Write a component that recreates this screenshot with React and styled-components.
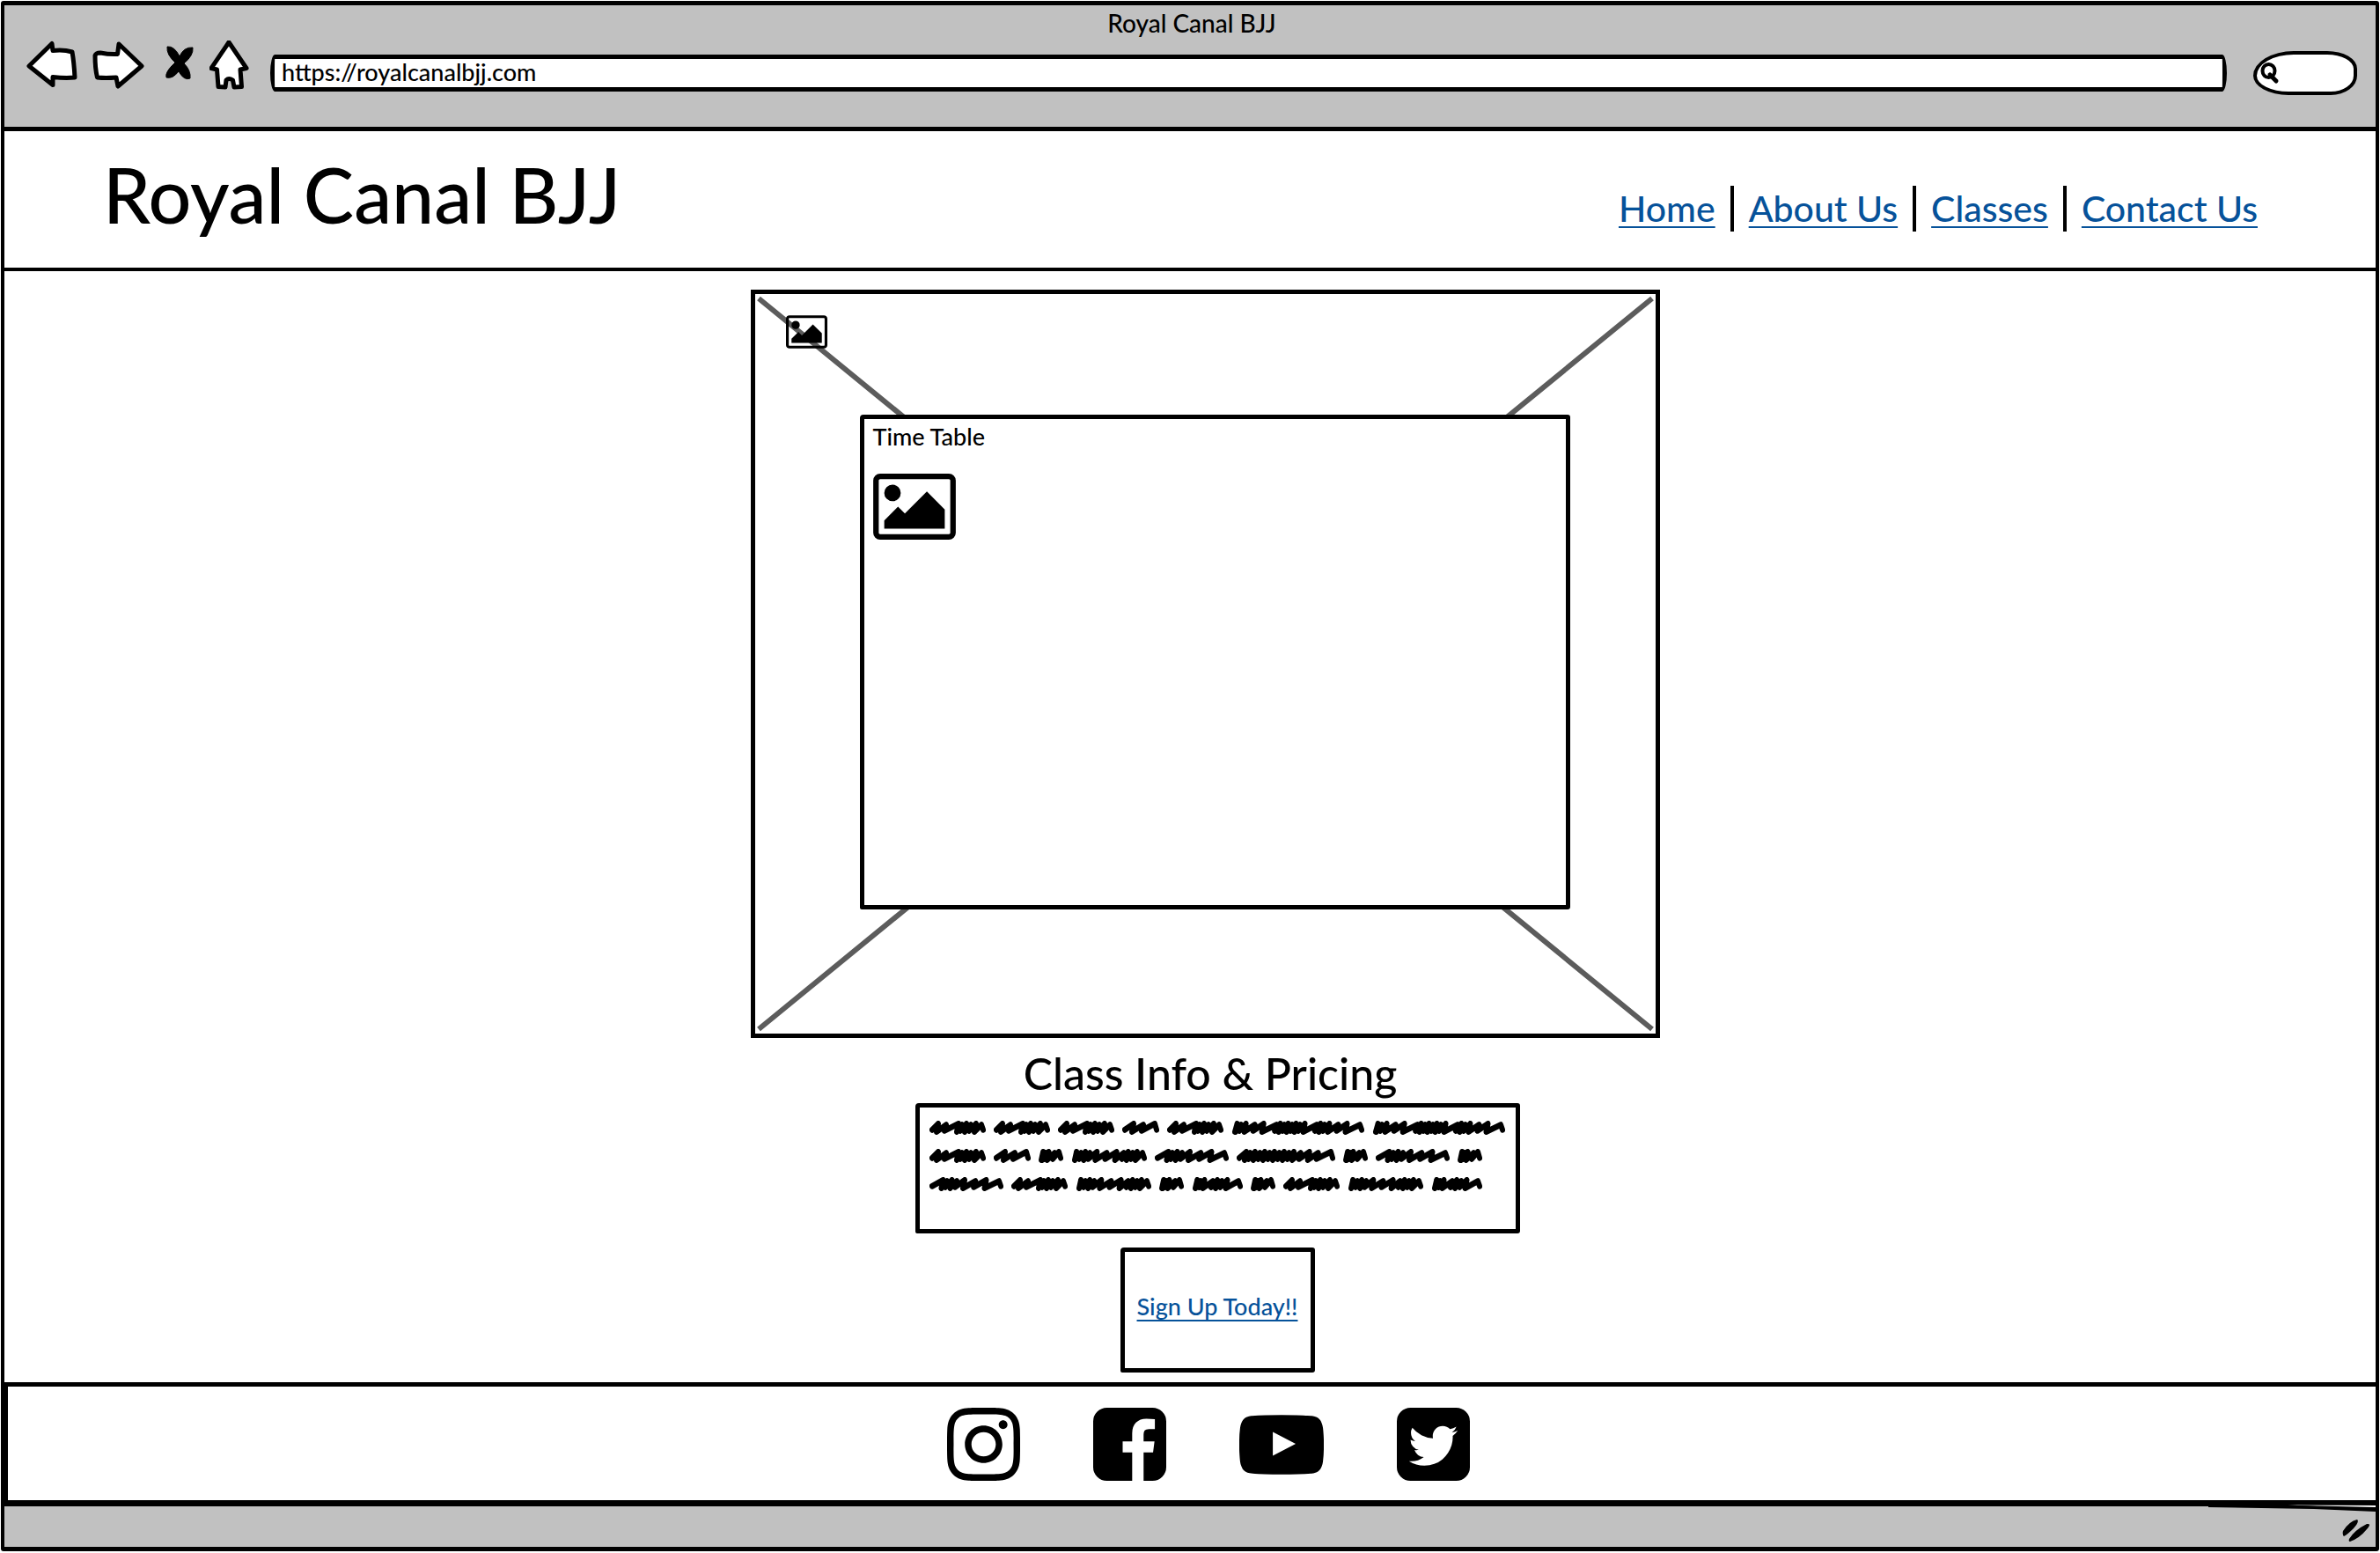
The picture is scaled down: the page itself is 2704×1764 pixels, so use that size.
import React from "react";
import styled, { createGlobalStyle } from "styled-components";
import { FaInstagram } from "react-icons/fa";

const ink = "#000";
const chromeGrey = "#c1c1c1";
const linkBlue = "#06529a";
const fontStack = 'Lato, "Open Sans", sans-serif';

const GlobalStyle = createGlobalStyle`
  *, *::before, *::after { box-sizing: border-box; }
  body { margin: 0; background: #fff; color: ${ink}; font-family: ${fontStack}; font-size: 27px; font-weight: 500; }
  svg { display: block; }
`;

const Browser = styled.div`
  display: flex;
  flex-direction: column;
  min-height: calc(100vh - 3px);
  margin: 1px 1px 2px;
  border: 5px solid ${ink};
  border-width: 5px 4px;
  border-radius: 3px;
`;

const Chrome = styled.header`
  background: ${chromeGrey};
  border-bottom: 5px solid ${ink};
  padding: 2px 21px 42px 25px;
`;

const WindowTitle = styled.div`
  margin-bottom: 2px;
  text-align: center;
  font-size: 28px;
  line-height: 36px;
`;

const Toolbar = styled.div`
  display: flex;
  align-items: center;
  gap: 16px;
  height: 56px;
`;

const ToolButton = styled.button`
  padding: 0;
  border: 0;
  background: none;
`;

const AddressBar = styled.input`
  flex: 1;
  min-width: 0;
  height: 42px;
  margin: 18px 14px 0 7px;
  padding: 0 8px 4px;
  background: #fff;
  border: 5px solid ${ink};
  border-radius: 6px / 24px;
  font: inherit;
  color: inherit;
`;

const SearchBox = styled.label`
  display: flex;
  align-items: center;
  width: 118px;
  height: 50px;
  margin-top: 18px;
  padding-left: 4px;
  background: #fff;
  border: 4px solid ${ink};
  border-radius: 46px 34px 30px 40px / 28px 20px 22px 22px;
`;

const SearchInput = styled.input`
  width: 70px;
  border: 0;
  outline: 0;
  background: none;
  font: inherit;
`;

const SiteHeader = styled.header`
  display: flex;
  justify-content: space-between;
  align-items: center;
  height: 159px;
  padding: 0 134px 0 112px;
  border-bottom: 4px solid ${ink};
`;

const SiteTitle = styled.h1`
  margin: 0 0 12px;
  font-size: 86px;
  font-weight: 500;
  line-height: 96px;
`;

const Nav = styled.nav`
  display: flex;
  align-items: center;
  margin-top: 20px;
`;

const TextLink = styled.a`
  color: ${linkBlue};
  font-size: ${(p) => p.$size}px;
  line-height: 52px;
  text-decoration: underline;
  text-decoration-thickness: 2px;
  text-decoration-skip-ink: none;
  text-underline-offset: 5px;
`;

const NavItem = styled.span`
  padding: 0 17px;
  border-right: 4px solid ${ink};
  &:last-child { border-right: 0; padding-right: 0; }
`;

const Main = styled.main`
  flex: 1;
  display: flex;
  flex-direction: column;
  align-items: center;
  padding: 21px 0 8px 34px;
`;

const Frame = styled.section`
  position: relative;
  display: flex;
  flex-direction: column;
  width: 1033px;
  max-width: 100%;
  height: 850px;
  padding: 24px 97px 141px 35px;
  border: 5px solid ${ink};
`;

const Diagonals = styled.svg`
  position: absolute;
  inset: 0;
  width: 100%;
  height: 100%;
`;

const PictureIcon = styled.svg`
  position: relative;
  flex: none;
`;

const SketchBox = styled.div`
  position: relative;
  background: #fff;
  border: 5px solid ${ink};
  border-radius: 4px 3px 3px 2px;
`;

const TimeTable = styled(SketchBox)`
  flex: 1;
  margin: 75px 0 0 84px;
  padding: 2px 10px;
`;

const BoxTitle = styled.h2`
  margin: 0 0 24px;
  font-size: 27px;
  font-weight: 500;
  line-height: 36px;
`;

const SectionTitle = styled.h2`
  margin: 10px 0 4px;
  padding-left: 12px;
  font-size: 50px;
  font-weight: 500;
  line-height: 60px;
`;

const Copy = styled(SketchBox)`
  display: flex;
  flex-direction: column;
  gap: 16px;
  width: 687px;
  height: 148px;
  margin-left: 28px;
  padding: 15px 11px;
`;

const ScribbleLine = styled.div`
  display: flex;
  gap: 9px;
`;

const SignUp = styled(SketchBox)`
  display: flex;
  align-items: center;
  justify-content: center;
  width: 221px;
  height: 142px;
  margin: 16px 0 0 28px;
  padding-bottom: 8px;
`;

const Footer = styled.footer`
  display: flex;
  align-items: center;
  justify-content: center;
  gap: 83px;
  height: 141px;
  padding: 2px 0 0 38px;
  border: 5px solid ${ink};
  border-width: 5px 0 7px 4px;
`;

const SocialLink = styled.a`
  color: ${ink};
`;

const StatusBar = styled.div`
  position: relative;
  display: flex;
  align-items: center;
  justify-content: flex-end;
  height: 46px;
  padding: 8px 6px 0 0;
  background: ${chromeGrey};
`;

const LooseStroke = styled.svg`
  position: absolute;
  right: 0;
  top: -3px;
`;

const toolIcons = [
  { label: "Back", x: 30, w: 58, d: "M33 75L59 49.500L60 57.500Q72 56 82 59Q84 70 85 88Q74 89 60 87.500L60 96.500Z" },
  { label: "Forward", x: 104, w: 60, d: "M108 63Q109 60 114 60Q124 62 133.500 61.500L135 50L161 75L134 98L132 88Q120 89 110.500 88Q108 78 108 63Z" },
  { label: "Stop", x: 180, w: 42, solid: true, d: "M190 53Q198 52 204 64Q209 53 219 54Q220 63 209 72Q217 80 216 89Q209 92 203 81Q196 90 189 88Q187 82 199 71Q189 62 190 53Z" },
  { label: "Home", x: 238, w: 46, d: "M260 48L280 77.500L273 79L274.500 98.500L266 99L264.500 91Q260 88 257 91L256 99L248 98.500L246.500 79L240 77.500Z" },
];

function ToolIcon({ icon }) {
  return (
    <svg width={icon.w} height="56" viewBox={`${icon.x} 46 ${icon.w} 56`}>
      <path
        d={icon.d}
        fill={icon.solid ? ink : "#fff"}
        stroke={ink}
        strokeWidth={icon.solid ? 1 : 5}
        strokeLinejoin="round"
      />
    </svg>
  );
}

function Picture({ width, height }) {
  return (
    <PictureIcon width={width} height={height} viewBox="64 128 1920 1536" aria-hidden="true">
      <path d="M704 576q0 80-56 136t-136 56-136-56-56-136 56-136 136-56 136 56 56 136zm1024 384v448h-1408v-192l320-320 160 160 512-512zm96-704h-1600q-13 0-22.500 9.500t-9.500 22.500v1216q0 13 9.500 22.500t22.500 9.500h1600q13 0 22.500-9.500t9.500-22.500v-1216q0-13-9.500-22.500t-22.500-9.500zm160 32v1216q0 66-47 113t-113 47h-1600q-66 0-113-47t-47-113v-1216q0-66 47-113t113-47h1600q66 0 113 47t47 113z" />
    </PictureIcon>
  );
}

// Pen rhythm per scribbled word: each number is the run of one up-stroke.
const words = {
  a: { w: 64, steps: [9, 9, 14, 4, 5, 5, 6, 6] },
  b: { w: 42, steps: [12, 11, 13] },
  c: { w: 28, steps: [5, 4, 4, 8, 6] },
  d: { w: 86, steps: [5, 5, 5, 5, 8, 11, 11, 8, 5, 5, 5, 6] },
  e: { w: 84, steps: [13, 4, 5, 5, 8, 11, 11, 13] },
  f: { w: 112, steps: [9, 4, 5, 5, 5, 5, 5, 5, 5, 5, 5, 7, 9, 9, 13] },
  g: { w: 58, steps: [5, 4, 4, 9, 5, 5, 6, 12] },
  h: { w: 151, steps: [5, 4, 5, 9, 9, 13, 4, 4, 4, 4, 4, 4, 5, 12, 4, 4, 5, 9, 9, 13] },
};

const copyLines = ["aaabahh", "abcdefcec", "eadcgcadg"];

function Scribble({ kind }) {
  const { w, steps } = words[kind];
  const total = steps.reduce((sum, s) => sum + s, 0);
  const scale = (w - 6) / total;
  let x = 3;
  let d = steps[0] < 7 ? "M4 11" : "M3 9";
  steps.forEach((s, i) => {
    const top = 3 + (i % 2);
    x += s * scale;
    const last = i === steps.length - 1;
    const low = last ? 9 : 11 - (i % 2);
    d += `L${x - 2} ${top}L${x - (last ? 0 : 4)} ${low}`;
  });
  return (
    <svg width={w} height="16" viewBox={`0 0 ${w} 14`} preserveAspectRatio="none" aria-hidden="true">
      <path d={d} fill="none" stroke={ink} strokeWidth="6" strokeLinecap="round" strokeLinejoin="round" />
    </svg>
  );
}

const FACEBOOK = "M1376 128q119 0 203.500 84.500t84.500 203.500v960q0 119-84.500 203.500t-203.500 84.500h-188v-595h199l30-232h-229v-148q0-56 23.500-84t91.500-28l122-1v-207q-63-9-178-9-136 0-217.500 80t-81.500 226v171h-200v232h200v595h-532q-119 0-203.500-84.500t-84.500-203.500v-960q0-119 84.500-203.500t203.500-84.500h960z";
const YOUTUBE = "M711 1128l484-250-484-253v503zm185-862q168 0 324.500 4.500t229.500 9.500l73 4q1 0 17 1.500t23 3 23.500 4.500 28.500 8 28 13 31 19.500 29 26.500q6 6 15.500 18.500t29 58.500 26.500 101q8 64 12.500 136.500t5.500 113.500v176q1 145-18 290-7 55-25 99.500t-32 61.500l-14 17q-14 15-29 26.500t-31 19-28 12.500-28.500 8-24 4.500-23 3-16.500 1.500q-251 19-627 19-207-2-359.500-6.500t-200.500-7.500l-49-4-36-4q-36-5-54.500-10t-51-21-56.500-41q-6-6-15.500-18.500t-29-58.500-26.500-101q-8-64-12.500-136.500t-5.500-113.500v-176q-1-145 18-290 7-55 25-99.500t32-61.500l14-17q14-15 29-26.500t31-19.500 28-13 28.500-8 23.500-4.500 23-3 17-1.500q251-18 627-18z";
const TWITTER = "M1408 610q-56 25-121 34 68-40 93-117-65 38-134 51-61-66-153-66-87 0-148.500 61.500t-61.500 148.500q0 29 5 48-129-7-242-65t-192-155q-29 50-29 106 0 114 91 175-47-1-100-26v2q0 75 50 133.500t123 72.500q-29 8-51 8-13 0-39-4 21 63 74.500 104t121.500 42q-116 90-261 90-26 0-50-3 148 94 322 94 112 0 210-35.500t168-95 120.500-137 75-162 24.500-168.500q0-18-1-27 63-45 105-109zm256-194v960q0 119-84.500 203.500t-203.500 84.500h-960q-119 0-203.500-84.500t-84.500-203.500v-960q0-119 84.500-203.500t203.500-84.500h960q119 0 203.500 84.500t84.500 203.500z";

const pages = ["Home", "About Us", "Classes", "Contact Us"];

export default function App() {
  return (
    <>
      <GlobalStyle />
      <Browser>
        <Chrome>
          <WindowTitle>Royal Canal BJJ</WindowTitle>
          <Toolbar>
            {toolIcons.map((icon) => (
              <ToolButton key={icon.label} type="button" aria-label={icon.label}>
                <ToolIcon icon={icon} />
              </ToolButton>
            ))}
            <AddressBar aria-label="Address" defaultValue="https://royalcanalbjj.com" />
            <SearchBox>
              <svg width="22" height="26" viewBox="0 0 22 26" aria-hidden="true">
                <ellipse cx="9.500" cy="10.500" rx="7" ry="7.500" fill="none" stroke={ink} strokeWidth="4" />
                <path d="M11 15L18 22" stroke={ink} strokeWidth="5" strokeLinecap="round" />
              </svg>
              <SearchInput aria-label="Search" />
            </SearchBox>
          </Toolbar>
        </Chrome>

        <SiteHeader>
          <SiteTitle>Royal Canal BJJ</SiteTitle>
          <Nav>
            {pages.map((page) => (
              <NavItem key={page}>
                <TextLink href="#" $size={41}>{page}</TextLink>
              </NavItem>
            ))}
          </Nav>
        </SiteHeader>

        <Main>
          <Frame>
            <Diagonals viewBox="0 0 1023 840" preserveAspectRatio="none" aria-hidden="true">
              <path d="M4 5L1019 835M1019 5L4 835" stroke="#5c5c5c" strokeWidth="6" />
            </Diagonals>
            <Picture width={47} height={38} />
            <TimeTable>
              <BoxTitle>Time Table</BoxTitle>
              <Picture width={94} height={75} />
            </TimeTable>
          </Frame>

          <SectionTitle>Class Info &amp; Pricing</SectionTitle>
          <Copy>
            {copyLines.map((line) => (
              <ScribbleLine key={line}>
                {[...line].map((kind, i) => (
                  <Scribble key={i} kind={kind} />
                ))}
              </ScribbleLine>
            ))}
          </Copy>
          <SignUp>
            <TextLink href="#" $size={27}>Sign Up Today!!</TextLink>
          </SignUp>
        </Main>

        <Footer>
          <SocialLink href="#" aria-label="Instagram">
            <FaInstagram viewBox="0 32 448 448" size={83} />
          </SocialLink>
          <SocialLink href="#" aria-label="Facebook">
            <svg width="83" height="83" viewBox="128 128 1536 1536"><path d={FACEBOOK} /></svg>
          </SocialLink>
          <SocialLink href="#" aria-label="YouTube">
            <svg width="96" height="96" viewBox="0 0 1792 1792"><path d={YOUTUBE} /></svg>
          </SocialLink>
          <SocialLink href="#" aria-label="Twitter">
            <svg width="83" height="83" viewBox="128 128 1536 1536"><path d={TWITTER} /></svg>
          </SocialLink>
        </Footer>
        <StatusBar>
          <LooseStroke width="190" height="9" viewBox="0 0 190 9" aria-hidden="true">
            <path d="M90 1.500L190 2V6Z" fill="#fff" />
            <path d="M0 1L60 1L190 4V9L120 6L0 4Z" fill={ink} />
          </LooseStroke>
          <svg width="32" height="28" viewBox="0 0 32 28" aria-hidden="true">
            <path d="M1 15Q8 4 17 2Q20 4 13 12Q6 19 2 21Q0 19 1 15ZM8 24Q14 14 28 7Q34 6 28 13Q20 23 9 27Q7 27 8 24Z" fill={ink} />
          </svg>
        </StatusBar>
      </Browser>
    </>
  );
}
